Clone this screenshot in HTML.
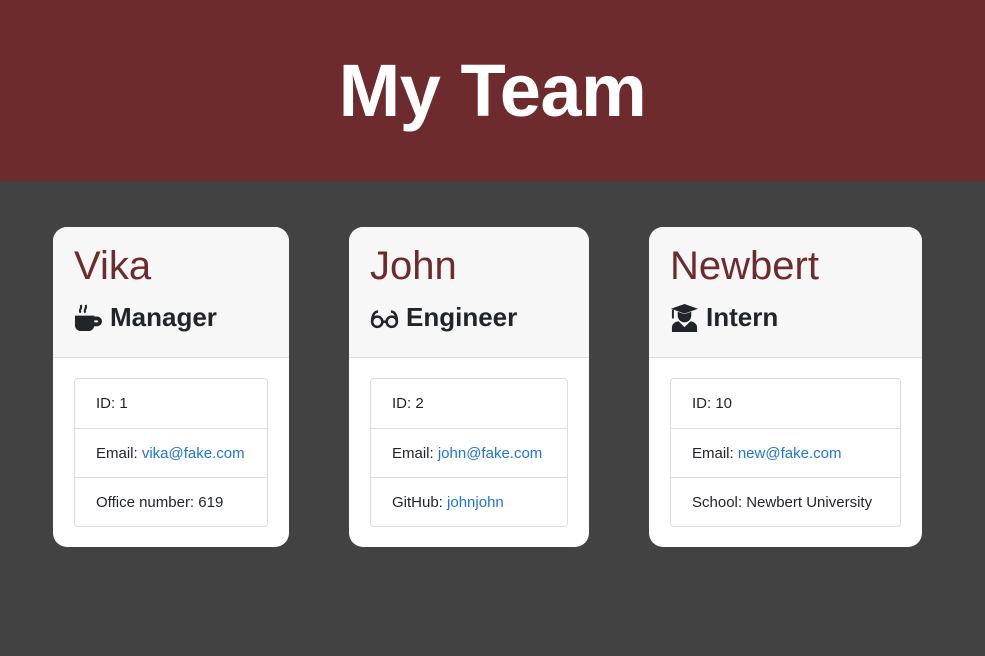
<!DOCTYPE html>
<html><head><meta charset="utf-8"><style>
*{box-sizing:border-box;margin:0;padding:0}
body{width:985px;height:656px;background:#424242;font-family:"Liberation Sans",sans-serif;position:relative;overflow:hidden}
.hdr{position:absolute;left:0;top:0;width:985px;height:181px;background:#6d2b2d;color:#fff;text-align:center;font-weight:bold;font-size:74px;line-height:181px;letter-spacing:-0.5px}
.card{position:absolute;top:227px;height:320px;background:#fff;border-radius:14px;overflow:hidden}
.top{height:131px;background:#f7f7f7;border-bottom:1px solid #ddd;padding-left:21px}
.name{color:#6d2b2d;font-size:40px;padding-top:17px;line-height:44px}
.role{font-size:26px;font-weight:bold;color:#212529;margin-top:12px;line-height:34px;display:flex;align-items:center;gap:7px}
.role svg{width:29px;height:29px}
.list{position:absolute;left:21px;right:21px;top:151px;border:1px solid #ddd;border-radius:4px}
.list div{height:49px;line-height:50px;padding-left:21px;font-size:15px;color:#212529;border-top:1px solid #ddd}
.list div:first-child{border-top:none}
a{color:#1f73e0;text-decoration:none}
</style></head><body>
<div class="hdr">My Team</div>

<div class="card" style="left:53px;width:236px">
<div class="top"><div class="name">Vika</div>
<div class="role"><svg viewBox="0 0 30 30"><path d="M1 13h20v10a6 6 0 0 1-6 6H7a6 6 0 0 1-6-6z" fill="#212529"/><path d="M20 14h4a5 5 0 0 1 0 10h-4v-4h4a1 1 0 0 0 0-2h-4z" fill="#212529"/><path d="M7 10c-3-3 2-4 0-8M12 10c-3-3 2-4 0-8" stroke="#212529" stroke-width="2.2" fill="none"/></svg>Manager</div></div>
<div class="list"><div>ID: 1</div><div>Email: <a>vika@fake.com</a></div><div>Office number: 619</div></div>
</div>

<div class="card" style="left:349px;width:240px">
<div class="top"><div class="name">John</div>
<div class="role"><svg viewBox="0 0 34 30"><circle cx="8.5" cy="20" r="6" stroke="#212529" stroke-width="3" fill="none"/><circle cx="25.5" cy="20" r="6" stroke="#212529" stroke-width="3" fill="none"/><path d="M14 20h6M2.5 20c0-8 3-12 7-12M31.5 20c0-8-3-12-7-12" stroke="#212529" stroke-width="3" fill="none"/></svg>Engineer</div></div>
<div class="list"><div>ID: 2</div><div>Email: <a>john@fake.com</a></div><div>GitHub: <a>johnjohn</a></div></div>
</div>

<div class="card" style="left:649px;width:273px">
<div class="top"><div class="name">Newbert</div>
<div class="role"><svg viewBox="0 0 30 30"><path d="M15 1L29 6 15 11 1 6z" fill="#212529"/><path d="M8 9v4a7 7 0 0 0 14 0v-4l-7 2.5z" fill="#212529"/><path d="M3 7v9" stroke="#212529" stroke-width="2"/><path d="M2 30v-5c0-3 3-6 7-6l6 6 6-6c4 0 7 3 7 6v5z" fill="#212529"/></svg>Intern</div></div>
<div class="list"><div>ID: 10</div><div>Email: <a>new@fake.com</a></div><div>School: Newbert University</div></div>
</div>
</body></html>
